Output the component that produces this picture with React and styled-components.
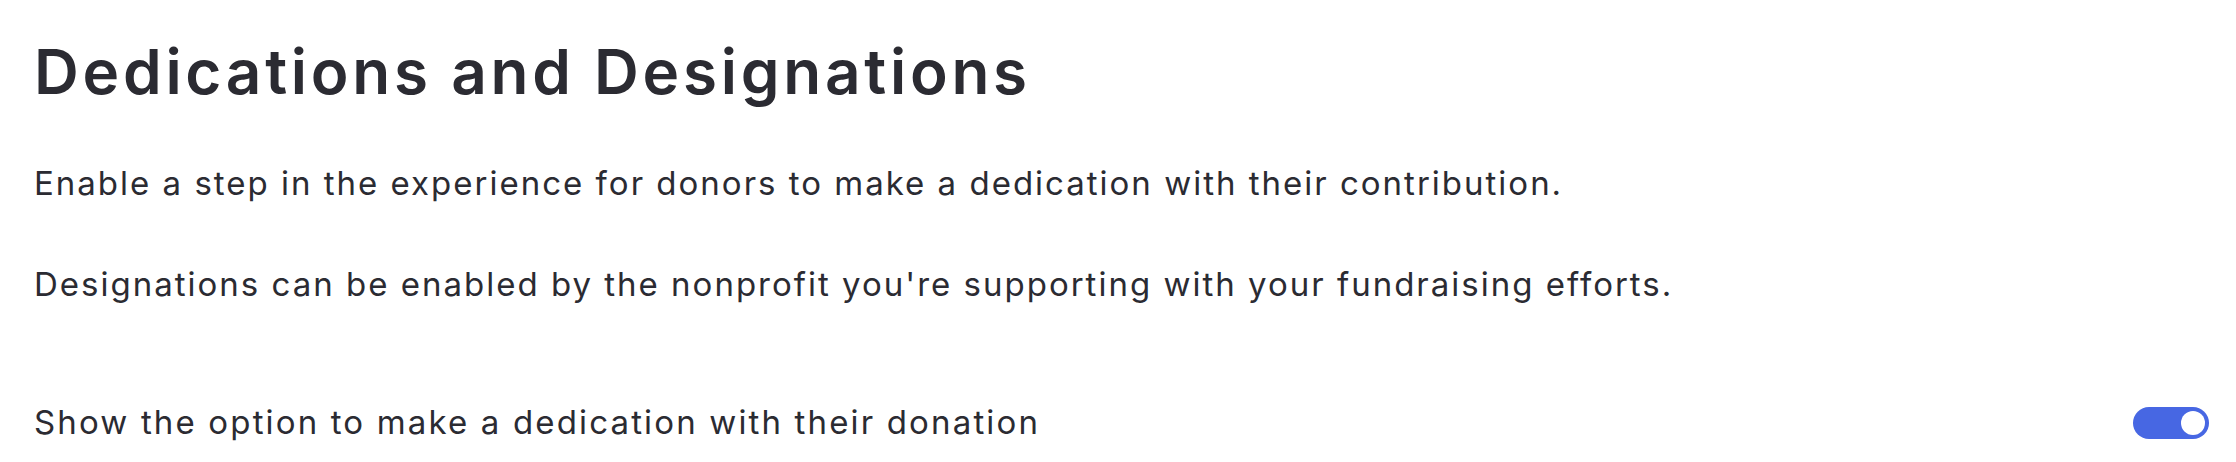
import styled, { createGlobalStyle } from 'styled-components';
import { useState } from 'react';

const GlobalStyle = createGlobalStyle`
    html, body {
        margin: 0;
        padding: 0;
        background: #ffffff;
    }
    body {
        font-family: Inter, "Noto Sans", sans-serif;
        color: #2b2b32;
    }
`

const Page = styled.div`
    display: flex;
    flex-direction: column;
    padding: 35px 27px 0 34px;
`

const Title = styled.h1`
    margin: 0;
    font-size: 62px;
    line-height: 1.2;
    font-weight: 600;
    letter-spacing: 3.75px;
`

const Text = styled.p`
    margin: ${props => props.$top}px 0 0;
    font-size: 33px;
    line-height: 1.5;
    font-weight: 400;
    letter-spacing: 2px;
`

const OptionRow = styled.div`
    display: flex;
    align-items: center;
    justify-content: space-between;
    margin-top: 89px;
    font-size: 33px;
    line-height: 1.5;
    letter-spacing: 2.15px;
`

const Switch = styled.button`
    position: relative;
    width: 76px;
    height: 32px;
    padding: 0;
    border: none;
    border-radius: 16px;
    cursor: pointer;
    background-color: ${props => props.$on ? '#4767e3' : '#c7c9d1'};

    &::after {
        content: '';
        position: absolute;
        top: 4px;
        left: ${props => props.$on ? '48px' : '4px'};
        width: 24px;
        height: 24px;
        border-radius: 50%;
        background: #ffffff;
    }
`

const App = () => {
    const [dedication, setDedication] = useState(true);

    return (
        <>
            <GlobalStyle />
            <Page>
                <Title>Dedications and Designations</Title>
                <Text $top={50}>Enable a step in the experience for donors to make a dedication with their contribution.</Text>
                <Text $top={51}>Designations can be enabled by the nonprofit you're supporting with your fundraising efforts.</Text>
                <OptionRow>
                    <span>Show the option to make a dedication with their donation</span>
                    <Switch
                        $on={dedication}
                        aria-label='Show dedication option'
                        onClick={() => setDedication(!dedication)}
                    />
                </OptionRow>
            </Page>
        </>
    )
}

export default App;
